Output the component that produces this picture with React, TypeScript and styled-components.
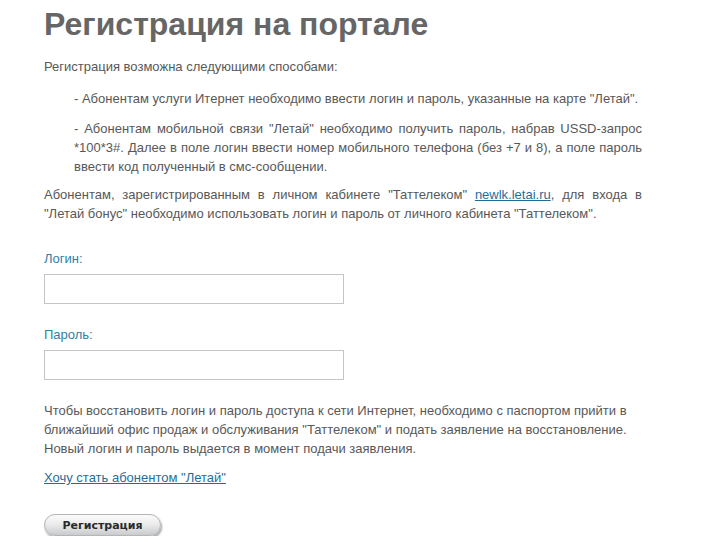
import React from "react";
import styled, { createGlobalStyle } from "styled-components";

const Global = createGlobalStyle`
  html, body { margin: 0; padding: 0; background: #fff; }
  body { font-family: "Liberation Sans", Arial, sans-serif; }
`;

const Page = styled.div`
  width: 598px;
  padding-left: 44px;
  color: #585858;
  font-size: 13px;
  line-height: 19px;
`;

const Title = styled.h1`
  margin: 6px 0 0;
  font-size: 32px;
  line-height: 36px;
  font-weight: bold;
  color: #666;
  white-space: nowrap;
`;

const Para = styled.p<{ $top: number; $indent?: boolean; $justify?: boolean }>`
  margin: ${(p) => p.$top}px 0 0;
  padding-left: ${(p) => (p.$indent ? 30 : 0)}px;
  text-align: ${(p) => (p.$justify ? "justify" : "left")};
`;

const Link = styled.a`
  color: #1f6e98;
  text-decoration: underline;
`;

const Label = styled.label<{ $top: number }>`
  display: block;
  margin-top: ${(p) => p.$top}px;
  color: #2f7ea6;
`;

const Input = styled.input`
  display: block;
  box-sizing: border-box;
  margin-top: 6px;
  width: 300px;
  height: 30px;
  border: 1px solid #c4c4c4;
  background: #fff;
  outline: none;
`;

const LinkLine = styled.div`
  margin-top: 10px;
`;

const Button = styled.button`
  display: block;
  margin-top: 27px;
  width: 117px;
  height: 22px;
  padding: 0;
  border: 1px solid #b5b5b5;
  border-radius: 11px;
  background: linear-gradient(#fbfbfb 0%, #ececec 45%, #c9cbce 100%);
  box-shadow: 1px 2px 2px rgba(0, 0, 0, 0.35);
  font-family: "DejaVu Sans", Verdana, sans-serif;
  font-weight: bold;
  font-size: 11px;
  color: #2a2a2a;
  cursor: pointer;
`;

export default function App() {
  return (
    <>
      <Global />
      <Page>
        <Title>Регистрация на портале</Title>
        <Para $top={15}>Регистрация возможна следующими способами:</Para>
        <Para $top={13} $indent>
          - Абонентам услуги Итернет необходимо ввести логин и пароль, указанные на карте "Летай".
        </Para>
        <Para $top={11} $indent $justify>
          - Абонентам мобильной связи "Летай" необходимо получить пароль, набрав USSD-запрос *100*3#.
          Далее в поле логин ввести номер мобильного телефона (без +7 и 8), а поле пароль ввести код
          полученный в смс-сообщении.
        </Para>
        <Para $top={9} $justify>
          Абонентам, зарегистрированным в личном кабинете "Таттелеком"{" "}
          <Link href="#">newlk.letai.ru</Link>, для входа в "Летай бонус" необходимо использовать
          логин и пароль от личного кабинета "Таттелеком".
        </Para>
        <Label $top={26}>Логин:</Label>
        <Input type="text" />
        <Label $top={21}>Пароль:</Label>
        <Input type="password" />
        <Para $top={21}>
          Чтобы восстановить логин и пароль доступа к сети Интернет, необходимо с паспортом прийти в
          ближайший офис продаж и обслуживания "Таттелеком" и подать заявление на восстановление.
          Новый логин и пароль выдается в момент подачи заявления.
        </Para>
        <LinkLine>
          <Link href="#">Хочу стать абонентом "Летай"</Link>
        </LinkLine>
        <Button type="button">Регистрация</Button>
      </Page>
    </>
  );
}
